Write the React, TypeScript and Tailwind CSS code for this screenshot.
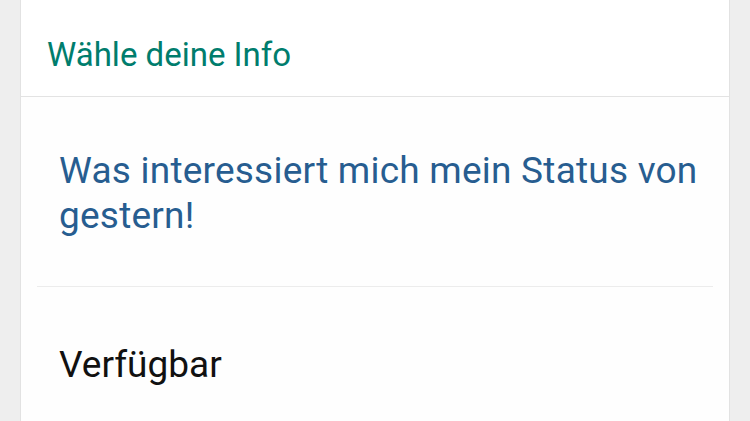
export default function App() {
	return (
		<div className="h-[421px] w-[750px] overflow-hidden bg-[#eeeeee] font-['Roboto',sans-serif]">
			<div className="ml-[20px] h-full w-[710px] border-x border-[#e2e2e2] bg-[#fefefe]">
				{/* header */}
				<div className="h-[97px] border-b border-[#e3e3e3] bg-white pl-[26px] pt-[35px]">
					<h1 className="text-[33px] leading-[40px] text-[#007d6d]">Wähle deine Info</h1>
				</div>

				{/* current status */}
				<div className="pl-[38px] pr-[8px] pt-[51px]">
					<p className="text-[37px] leading-[45px] tracking-[0.22px] text-[#275d90]">
						Was interessiert mich mein Status von gestern!
					</p>
				</div>
				<div className="mx-[16px] mt-[48px] h-px bg-[#ececec]" />

				{/* options */}
				<div className="px-[38px] pt-[55px]">
					<p className="text-[37px] leading-[45px] text-[#111111]">Verfügbar</p>
				</div>
			</div>
		</div>
	);
}
